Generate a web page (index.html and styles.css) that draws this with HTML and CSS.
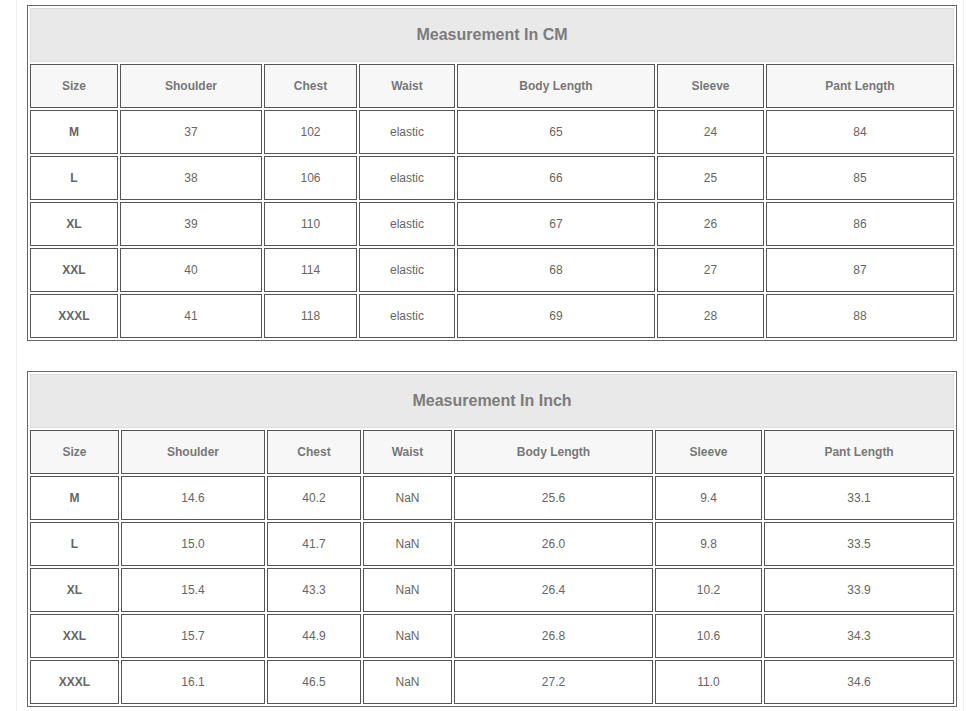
FILE: index.html
```html
<!DOCTYPE html>
<html>
<head>
<meta charset="utf-8">
<link rel="stylesheet" href="styles.css">
</head>
<body>
<div class="page">
  <table class="size-table cm">
    <colgroup>
      <col class="c1"><col class="c2"><col class="c3"><col class="c4"><col class="c5"><col class="c6"><col class="c7">
    </colgroup>
    <tr><td class="title" colspan="7">Measurement In CM</td></tr>
    <tr class="head"><td>Size</td><td>Shoulder</td><td>Chest</td><td>Waist</td><td>Body Length</td><td>Sleeve</td><td>Pant Length</td></tr>
    <tr><td class="sz">M</td><td>37</td><td>102</td><td>elastic</td><td>65</td><td>24</td><td>84</td></tr>
    <tr><td class="sz">L</td><td>38</td><td>106</td><td>elastic</td><td>66</td><td>25</td><td>85</td></tr>
    <tr><td class="sz">XL</td><td>39</td><td>110</td><td>elastic</td><td>67</td><td>26</td><td>86</td></tr>
    <tr><td class="sz">XXL</td><td>40</td><td>114</td><td>elastic</td><td>68</td><td>27</td><td>87</td></tr>
    <tr><td class="sz">XXXL</td><td>41</td><td>118</td><td>elastic</td><td>69</td><td>28</td><td>88</td></tr>
  </table>
  <table class="size-table inch">
    <colgroup>
      <col class="c1"><col class="c2"><col class="c3"><col class="c4"><col class="c5"><col class="c6"><col class="c7">
    </colgroup>
    <tr><td class="title" colspan="7">Measurement In Inch</td></tr>
    <tr class="head"><td>Size</td><td>Shoulder</td><td>Chest</td><td>Waist</td><td>Body Length</td><td>Sleeve</td><td>Pant Length</td></tr>
    <tr><td class="sz">M</td><td>14.6</td><td>40.2</td><td>NaN</td><td>25.6</td><td>9.4</td><td>33.1</td></tr>
    <tr><td class="sz">L</td><td>15.0</td><td>41.7</td><td>NaN</td><td>26.0</td><td>9.8</td><td>33.5</td></tr>
    <tr><td class="sz">XL</td><td>15.4</td><td>43.3</td><td>NaN</td><td>26.4</td><td>10.2</td><td>33.9</td></tr>
    <tr><td class="sz">XXL</td><td>15.7</td><td>44.9</td><td>NaN</td><td>26.8</td><td>10.6</td><td>34.3</td></tr>
    <tr><td class="sz">XXXL</td><td>16.1</td><td>46.5</td><td>NaN</td><td>27.2</td><td>11.0</td><td>34.6</td></tr>
  </table>
</div>
</body>
</html>
```
FILE: styles.css
```css
html, body {
  margin: 0;
  padding: 0;
  background: #fff;
}
body {
  font-family: "Liberation Sans", Arial, sans-serif;
}
.page {
  margin-left: 16px;
  width: 948px;
  min-height: 711px;
  border-left: 1px solid #eeeeee;
  border-right: 1px solid #eeeeee;
  padding: 5px 0 0 10px;
  box-sizing: border-box;
}
.size-table {
  width: 930px;
  table-layout: fixed;
  border-collapse: separate;
  border-spacing: 2px;
  border: 1px solid #666;
  box-sizing: border-box;
}
.size-table + .size-table {
  margin-top: 30px;
}
.size-table td {
  box-sizing: border-box;
  height: 44px;
  padding: 0;
  border: 1px solid #555;
  text-align: center;
  vertical-align: middle;
  font-size: 12px;
  color: #666;
  background: #fff;
}
.size-table td.title {
  height: 54px;
  border: 1px solid #dcdcdc;
  background: #e9e9e9;
  font-size: 16px;
  font-weight: bold;
  color: #7c7c7c;
}
.size-table .head td {
  background: #f7f7f7;
  font-weight: bold;
  color: #777;
}
.size-table td.sz {
  font-weight: bold;
  color: #666;
}
.cm .c1 { width: 88px; }
.cm .c2 { width: 142px; }
.cm .c3 { width: 93px; }
.cm .c4 { width: 96px; }
.cm .c5 { width: 198px; }
.cm .c6 { width: 107px; }
.cm .c7 { width: 188px; }
.inch .c1 { width: 89px; }
.inch .c2 { width: 144px; }
.inch .c3 { width: 94px; }
.inch .c4 { width: 89px; }
.inch .c5 { width: 199px; }
.inch .c6 { width: 107px; }
.inch .c7 { width: 190px; }
```
